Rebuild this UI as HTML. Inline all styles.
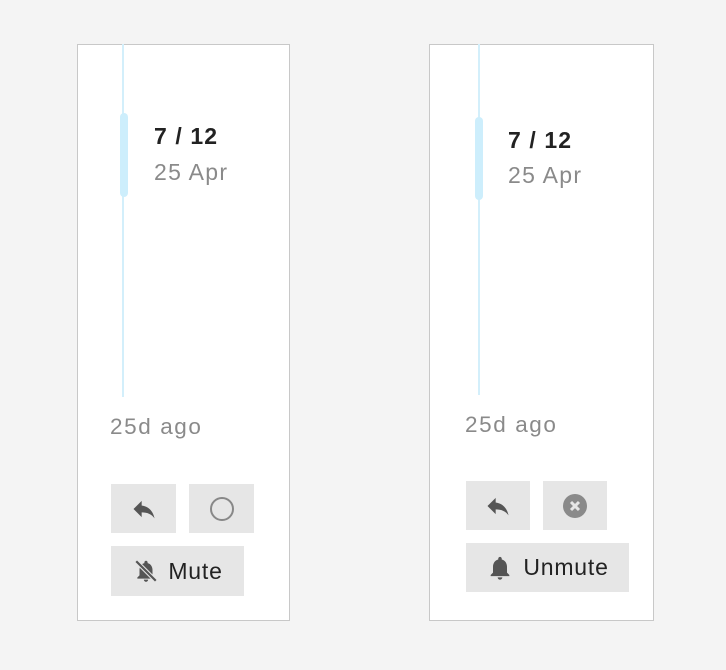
<html><head><style>
body{margin:0;width:726px;height:670px;background:#f4f4f4;position:relative;font-family:"Liberation Sans",Arial,sans-serif;overflow:hidden}
.card{position:absolute;background:#fff;border:1px solid #c8c8c8;box-sizing:border-box}
.line{position:absolute;width:2px;background:#d3effb}
.bar{position:absolute;width:8px;background:#cdeefc;border-radius:4px}
.t1{position:absolute;font-weight:bold;font-size:23px;color:#222;white-space:nowrap;letter-spacing:1.1px}
.t2{position:absolute;font-size:23px;color:#8a8a8a;white-space:nowrap;letter-spacing:1.3px}
.ago{position:absolute;font-size:22.5px;color:#8a8a8a;white-space:nowrap;letter-spacing:1.6px}
.btn{position:absolute;background:#e6e6e6;display:flex;align-items:center;justify-content:center;font-size:23px;color:#222;letter-spacing:0.8px}
</style></head><body>
<div class="card" style="left:77px;top:44px;width:213px;height:577px"></div>
<div class="line" style="left:122px;top:44px;height:353px"></div>
<div class="bar" style="left:120px;top:113px;height:84px"></div>
<div class="t1" style="left:154px;top:123px">7 / 12</div>
<div class="t2" style="left:154px;top:159px">25 Apr</div>
<div class="ago" style="left:110px;top:414px">25d ago</div>
<div class="btn" style="left:111px;top:484px;width:65px;height:49px"><svg width="30" height="28" viewBox="0 0 24 24"><path d="M10 9V5l-7 7 7 7v-4.1c5 0 8.5 1.6 11 5.1-1-5-4-10-11-11z" fill="#555"/></svg></div>
<div class="btn" style="left:189px;top:484px;width:65px;height:49px"><svg width="26" height="26"><circle cx="13" cy="13" r="11" fill="none" stroke="#888" stroke-width="2"/></svg></div>
<div class="btn" style="left:111px;top:546px;width:133px;height:50px"><svg width="28" height="26" viewBox="0 0 24 24" style="margin-right:8px"><path d="M12 22c1.1 0 2-.9 2-2h-4c0 1.1.9 2 2 2zm6-6v-5c0-3-1.6-5.6-4.5-6.3V4c0-.8-.7-1.5-1.5-1.5s-1.5.7-1.5 1.5v.7C7.6 5.4 6 8 6 11v5l-2 2v1h16v-1l-2-2z" fill="#555"/><path d="M3 3l18 18" stroke="#e6e6e6" stroke-width="4"/><path d="M3 3l18 18" stroke="#555" stroke-width="2"/></svg>Mute</div>

<div class="card" style="left:429px;top:44px;width:225px;height:577px"></div>
<div class="line" style="left:478px;top:44px;height:351px"></div>
<div class="bar" style="left:475px;top:117px;height:83px"></div>
<div class="t1" style="left:508px;top:127px">7 / 12</div>
<div class="t2" style="left:508px;top:162px">25 Apr</div>
<div class="ago" style="left:465px;top:412px">25d ago</div>
<div class="btn" style="left:466px;top:481px;width:64px;height:49px"><svg width="30" height="28" viewBox="0 0 24 24"><path d="M10 9V5l-7 7 7 7v-4.1c5 0 8.5 1.6 11 5.1-1-5-4-10-11-11z" fill="#555"/></svg></div>
<div class="btn" style="left:543px;top:481px;width:64px;height:49px"><svg width="26" height="26"><circle cx="13" cy="13" r="12" fill="#8a8a8a"/><path d="M9 9l8 8M17 9l-8 8" stroke="#e6e6e6" stroke-width="3"/></svg></div>
<div class="btn" style="left:466px;top:543px;width:163px;height:49px"><svg width="28" height="28" viewBox="0 0 24 24" style="margin-right:9px"><path d="M12 22c1.1 0 2-.9 2-2h-4c0 1.1.9 2 2 2zm6-6v-5c0-3-1.6-5.6-4.5-6.3V4c0-.8-.7-1.5-1.5-1.5s-1.5.7-1.5 1.5v.7C7.6 5.4 6 8 6 11v5l-2 2v1h16v-1l-2-2z" fill="#555"/></svg>Unmute</div>
</body></html>
